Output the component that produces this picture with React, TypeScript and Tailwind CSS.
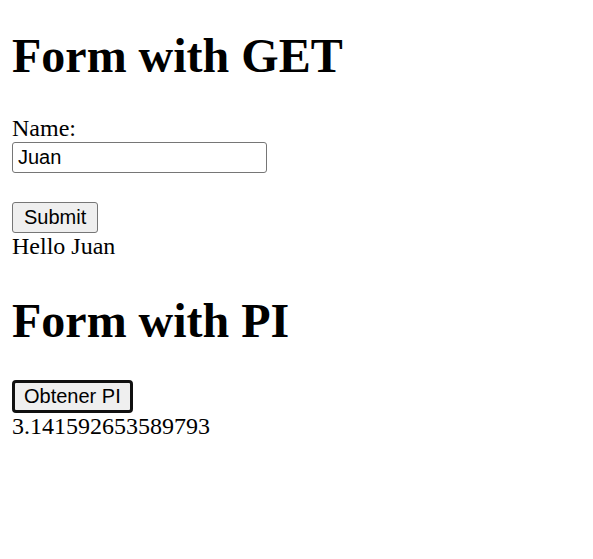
export default function App() {
  return (
    <div className="m-[12px] font-['Liberation_Serif',serif] text-[24px] leading-[normal] text-black">
      <h1 className="mt-[28px] mb-[32px] text-[48px] font-bold leading-[normal]">Form with GET</h1>
      <form>
        <label>Name:</label>
        <br />
        <input
          type="text"
          defaultValue="Juan"
          className="h-[31px] w-[255px] rounded-[3px] border border-[#767676] bg-white px-[5px] align-middle font-['Liberation_Sans',sans-serif] text-[20px]"
        />
        <br />
        <br />
        <button
          type="button"
          className="mt-[2px] h-[31px] rounded-[3px] border border-[#767676] bg-[#efefef] px-[11px] align-middle font-['Liberation_Sans',sans-serif] text-[20px]"
        >
          Submit
        </button>
      </form>
      <div>Hello Juan</div>
      <h1 className="mt-[33px] mb-[32px] text-[48px] font-bold leading-[normal]">Form with PI</h1>
      <button
        type="button"
        className="h-[33px] rounded-[4px] border-[3px] border-[#101010] bg-[#efefef] px-[9px] align-middle font-['Liberation_Sans',sans-serif] text-[20px]"
      >
        Obtener PI
      </button>
      <div>3.141592653589793</div>
    </div>
  );
}
